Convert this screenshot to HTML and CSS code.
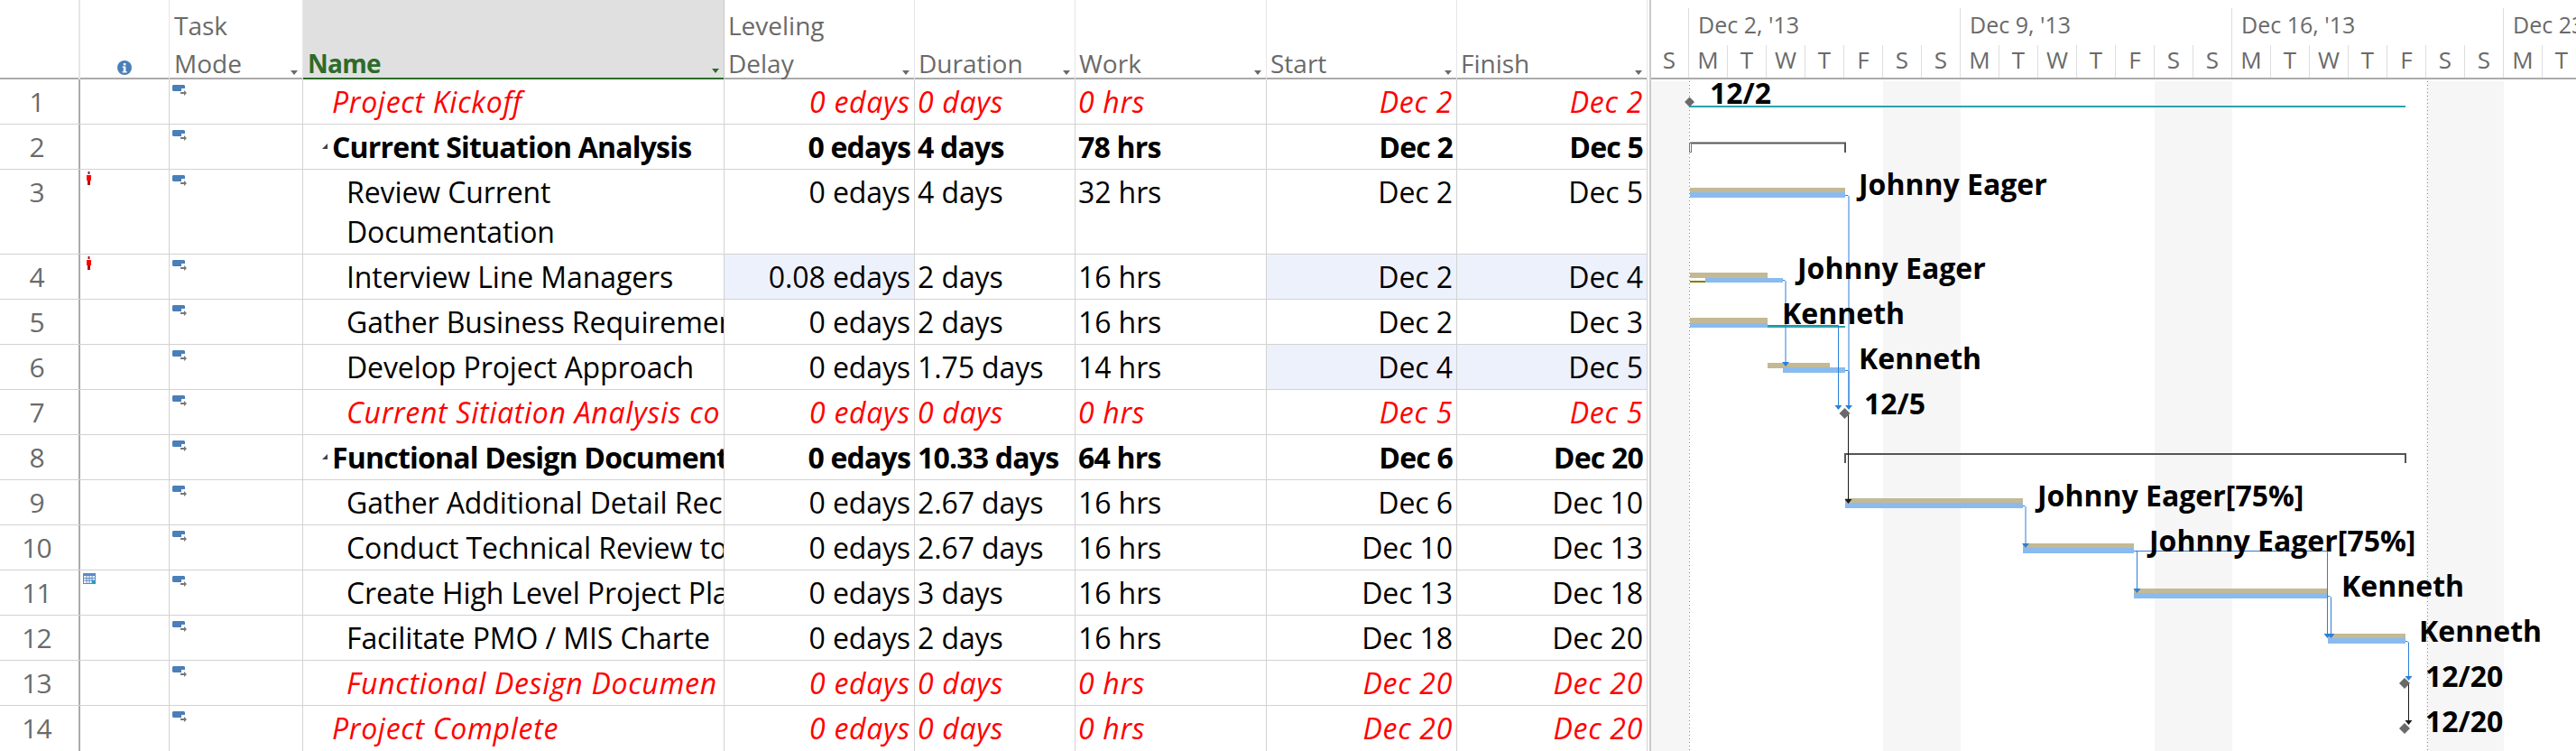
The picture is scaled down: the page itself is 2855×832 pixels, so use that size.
FILE: index.html
```html
<!DOCTYPE html>
<html lang="en">
<head>
<meta charset="utf-8">
<title>Project Gantt</title>
<link rel="stylesheet" href="styles.css">
</head>
<body>
<svg class="defs" width="0" height="0" aria-hidden="true">
  <symbol id="mode" viewBox="0 0 17 12">
    <path d="M1 0h12l1 1v3H10v3H1L0 6V1z" fill="#4a7fb8"/>
    <path d="M9 8h4V6l3 3-3 3v-2H9z" fill="#777"/>
  </symbol>
  <symbol id="person" viewBox="0 0 5 15">
    <rect x="1.500" y="0" width="2" height="3" fill="#a8101a"/>
    <rect x="0" y="4" width="5" height="6" fill="#f00"/>
    <rect x="1" y="10" width="3" height="5" fill="#b80c0c"/>
  </symbol>
</svg>
<div class="app">
  <div class="table">
    <div class="row head">
      <div class="c num"></div>
      <div class="c ind"><svg class="info" viewBox="0 0 16 16"><circle cx="8" cy="8" r="8" fill="#4a7fb8"/><rect x="6.800" y="3" width="2.600" height="2.400" fill="#fff"/><path d="M5.800 6.600h3.600v5.400h1.200v1.400H5.600V12h1.200V8H5.800z" fill="#fff"/></svg></div>
      <div class="c h htask">Task<br>Mode<i class="sort"></i></div>
      <div class="c h sel"><br>Name<i class="sort"></i></div>
      <div class="c h">Leveling<br>Delay<i class="sort"></i></div>
      <div class="c h"><br>Duration<i class="sort"></i></div>
      <div class="c h"><br>Work<i class="sort"></i></div>
      <div class="c h"><br>Start<i class="sort"></i></div>
      <div class="c h"><br>Finish<i class="sort"></i></div>
    </div>

    <div class="row ms">
      <div class="c num">1</div><div class="c ind"></div><div class="c mode"><svg class="ico"><use href="#mode"/></svg></div>
      <div class="c name l1">Project Kickoff</div>
      <div class="c r">0 edays</div><div class="c">0 days</div><div class="c">0 hrs</div><div class="c r">Dec 2</div><div class="c r">Dec 2</div>
    </div>
    <div class="row sum">
      <div class="c num">2</div><div class="c ind"></div><div class="c mode"><svg class="ico"><use href="#mode"/></svg></div>
      <div class="c name l1"><i class="tw"></i>Current Situation Analysis</div>
      <div class="c r">0 edays</div><div class="c">4 days</div><div class="c">78 hrs</div><div class="c r">Dec 2</div><div class="c r">Dec 5</div>
    </div>
    <div class="row tall">
      <div class="c num">3</div><div class="c ind"><svg class="pers"><use href="#person"/></svg></div><div class="c mode"><svg class="ico"><use href="#mode"/></svg></div>
      <div class="c name l2">Review Current<br>Documentation</div>
      <div class="c r">0 edays</div><div class="c">4 days</div><div class="c">32 hrs</div><div class="c r">Dec 2</div><div class="c r">Dec 5</div>
    </div>
    <div class="row">
      <div class="c num">4</div><div class="c ind"><svg class="pers"><use href="#person"/></svg></div><div class="c mode"><svg class="ico"><use href="#mode"/></svg></div>
      <div class="c name l2">Interview Line Managers</div>
      <div class="c r chg">0.08 edays</div><div class="c">2 days</div><div class="c">16 hrs</div><div class="c r chg">Dec 2</div><div class="c r chg">Dec 4</div>
    </div>
    <div class="row">
      <div class="c num">5</div><div class="c ind"></div><div class="c mode"><svg class="ico"><use href="#mode"/></svg></div>
      <div class="c name l2">Gather Business Requiremer</div>
      <div class="c r">0 edays</div><div class="c">2 days</div><div class="c">16 hrs</div><div class="c r">Dec 2</div><div class="c r">Dec 3</div>
    </div>
    <div class="row">
      <div class="c num">6</div><div class="c ind"></div><div class="c mode"><svg class="ico"><use href="#mode"/></svg></div>
      <div class="c name l2">Develop Project Approach</div>
      <div class="c r">0 edays</div><div class="c">1.75 days</div><div class="c">14 hrs</div><div class="c r chg">Dec 4</div><div class="c r chg">Dec 5</div>
    </div>
    <div class="row ms">
      <div class="c num">7</div><div class="c ind"></div><div class="c mode"><svg class="ico"><use href="#mode"/></svg></div>
      <div class="c name l2">Current Sitiation Analysis co</div>
      <div class="c r">0 edays</div><div class="c">0 days</div><div class="c">0 hrs</div><div class="c r">Dec 5</div><div class="c r">Dec 5</div>
    </div>
    <div class="row sum">
      <div class="c num">8</div><div class="c ind"></div><div class="c mode"><svg class="ico"><use href="#mode"/></svg></div>
      <div class="c name l1"><i class="tw"></i>Functional Design Document</div>
      <div class="c r">0 edays</div><div class="c">10.33 days</div><div class="c">64 hrs</div><div class="c r">Dec 6</div><div class="c r">Dec 20</div>
    </div>
    <div class="row">
      <div class="c num">9</div><div class="c ind"></div><div class="c mode"><svg class="ico"><use href="#mode"/></svg></div>
      <div class="c name l2">Gather Additional Detail Rec</div>
      <div class="c r">0 edays</div><div class="c">2.67 days</div><div class="c">16 hrs</div><div class="c r">Dec 6</div><div class="c r">Dec 10</div>
    </div>
    <div class="row">
      <div class="c num">10</div><div class="c ind"></div><div class="c mode"><svg class="ico"><use href="#mode"/></svg></div>
      <div class="c name l2">Conduct Technical Review to</div>
      <div class="c r">0 edays</div><div class="c">2.67 days</div><div class="c">16 hrs</div><div class="c r">Dec 10</div><div class="c r">Dec 13</div>
    </div>
    <div class="row">
      <div class="c num">11</div>
      <div class="c ind"><svg class="cal" viewBox="0 0 14 12"><rect width="14" height="12" fill="#5b8ac4"/><rect x="1" y="3" width="12" height="8" fill="#fff"/><path d="M4 3v8M7 3v8M10 3v8M1 5.500h12M1 8h12" stroke="#5b8ac4" stroke-width="1" fill="none"/><rect x="10" y="8" width="3" height="3" fill="#1aa0c8"/></svg></div>
      <div class="c mode"><svg class="ico"><use href="#mode"/></svg></div>
      <div class="c name l2">Create High Level Project Pla</div>
      <div class="c r">0 edays</div><div class="c">3 days</div><div class="c">16 hrs</div><div class="c r">Dec 13</div><div class="c r">Dec 18</div>
    </div>
    <div class="row">
      <div class="c num">12</div><div class="c ind"></div><div class="c mode"><svg class="ico"><use href="#mode"/></svg></div>
      <div class="c name l2">Facilitate PMO / MIS Charte</div>
      <div class="c r">0 edays</div><div class="c">2 days</div><div class="c">16 hrs</div><div class="c r">Dec 18</div><div class="c r">Dec 20</div>
    </div>
    <div class="row ms">
      <div class="c num">13</div><div class="c ind"></div><div class="c mode"><svg class="ico"><use href="#mode"/></svg></div>
      <div class="c name l2">Functional Design Documen</div>
      <div class="c r">0 edays</div><div class="c">0 days</div><div class="c">0 hrs</div><div class="c r">Dec 20</div><div class="c r">Dec 20</div>
    </div>
    <div class="row ms last">
      <div class="c num">14</div><div class="c ind"></div><div class="c mode"><svg class="ico"><use href="#mode"/></svg></div>
      <div class="c name l1">Project Complete</div>
      <div class="c r">0 edays</div><div class="c">0 days</div><div class="c">0 hrs</div><div class="c r">Dec 20</div><div class="c r">Dec 20</div>
    </div>
  </div>

  <div class="split"></div>

  <div class="chart">
    <div class="scale">
      <div class="weeks">
        <div class="wk blank"></div>
        <div class="wk">Dec 2, '13</div>
        <div class="wk">Dec 9, '13</div>
        <div class="wk">Dec 16, '13</div>
        <div class="wk">Dec 23, '13</div>
      </div>
      <div class="days">
        <span>S</span><span>M</span><span>T</span><span>W</span><span>T</span><span>F</span><span>S</span><span>S</span>
        <span>M</span><span>T</span><span>W</span><span>T</span><span>F</span><span>S</span><span>S</span>
        <span>M</span><span>T</span><span>W</span><span>T</span><span>F</span><span>S</span><span>S</span>
        <span>M</span><span>T</span>
      </div>
    </div>
    <div class="canvas">
      <svg class="gantt" viewBox="1830 88 1025 744" width="1025" height="744">
        <g class="wkend">
          <rect x="1830" y="90" width="42" height="742"/>
          <rect x="2087" y="90" width="86" height="742"/>
          <rect x="2388" y="90" width="86" height="742"/>
          <rect x="2689" y="90" width="86" height="742"/>
        </g>
        <path class="dots" d="M1872.500 90V832M2690.500 90V832"/>
        <rect class="teal" x="1873" y="117" width="793" height="2"/>
        <path class="bracket" d="M1873 158.500H2045V169"/>
        <rect class="tick" x="1872.500" y="158.500" width="2" height="10"/>
        <path class="bracket" d="M2045 513V503H2666V513"/>

        <g class="bars">
          <rect class="tan" x="1873" y="208" width="172" height="5"/><rect class="blue" x="1873" y="213" width="172" height="6"/>
          <rect class="tan" x="1873" y="302" width="86" height="6"/><rect class="blue" x="1890" y="308" width="86" height="5"/><rect class="olive" x="1873" y="311" width="17" height="2"/>
          <rect class="tan" x="1873" y="352" width="86" height="6"/><rect class="blue" x="1873" y="358" width="86" height="5"/><rect class="teal" x="1959" y="361" width="86" height="2"/>
          <rect class="tan" x="1959" y="402" width="69" height="6"/><rect class="blue" x="1976" y="407" width="69" height="6"/>
          <rect class="tan" x="2045" y="552" width="197" height="5"/><rect class="blue" x="2045" y="557" width="197" height="6"/>
          <rect class="tan" x="2242" y="602" width="123" height="5"/><rect class="blue" x="2242" y="607" width="123" height="6"/>
          <rect class="tan" x="2365" y="652" width="215" height="5"/><rect class="blue" x="2365" y="657" width="215" height="6"/>
          <rect class="tan" x="2580" y="702" width="86" height="5"/><rect class="blue" x="2580" y="707" width="86" height="6"/>
        </g>

        <g class="links">
          <path d="M2045 216.500h3l1 1V449"/>
          <path d="M1976 310.500h2l1 1V401"/>
          <path d="M1959 360.500H2037.500V449"/>
          <path d="M2045 410.500h3l1 1V449"/>
          <path d="M2242 560.500h2l1 1V602"/>
          <path d="M2365 610.500H2578l1.500 1.500V702"/>
          <path d="M2368.500 610.500V652"/>
          <path d="M2580 660.500h2l1.500 1.500V702"/>
          <path d="M2666 710.500h2l1.500 1.500V749"/>
        </g>
        <g class="heads">
          <path d="M2045 449h8l-4 5z"/><path d="M2033.500 449h8l-4 5z"/>
          <path d="M1975 401h8l-4 5z"/>
          <path d="M2241 602h8l-4 5z"/>
          <path d="M2364.500 652h8l-4 5z"/>
          <path d="M2575.500 702h8l-4 5z"/><path d="M2579.500 702h8l-4 5z"/>
          <path d="M2665.500 749h8l-4 5z"/>
        </g>
        <path class="blk" d="M2048.500 459V553M2669.500 758V798"/>
        <path class="blkhead" d="M2044.500 553h8l-4 5z"/>
        <path class="blkhead" d="M2665.500 798h8l-4 5z"/>

        <g class="dia">
          <path d="M1872.500 107.500l5.500 5.500-5.500 5.500-5.500-5.500z"/>
          <path d="M2044.500 452l6 6-6 6-6-6z"/>
          <path d="M2665 751l6 6-6 6-6-6z"/>
          <path d="M2665 801l6 6-6 6-6-6z"/>
        </g>
      </svg>
      <span class="lbl" style="left:65px;top:-5px">12/2</span>
      <span class="lbl" style="left:230px;top:96px">Johnny Eager</span>
      <span class="lbl" style="left:162px;top:189px">Johnny Eager</span>
      <span class="lbl" style="left:145px;top:239px">Kenneth</span>
      <span class="lbl" style="left:230px;top:289px">Kenneth</span>
      <span class="lbl" style="left:236px;top:339px">12/5</span>
      <span class="lbl" style="left:428px;top:441px">Johnny Eager[75%]</span>
      <span class="lbl" style="left:552px;top:491px">Johnny Eager[75%]</span>
      <span class="lbl" style="left:765px;top:541px">Kenneth</span>
      <span class="lbl" style="left:851px;top:591px">Kenneth</span>
      <span class="lbl" style="left:858px;top:641px">12/20</span>
      <span class="lbl" style="left:858px;top:691px">12/20</span>
    </div>
  </div>
</div>
</body>
</html>
```

FILE: styles.css
```css
* { box-sizing: border-box; }
html, body { margin: 0; padding: 0; background: #fff; }
body {
  width: 2855px;
  height: 832px;
  overflow: hidden;
  font-family: "Open Sans", "Noto Sans", sans-serif;
  color: #000;
}
.defs { position: absolute; }
.app { display: flex; height: 832px; }

/* table */
.table { width: 1826px; flex: none; }
.row {
  display: grid;
  grid-template-columns: 89px 99px 148px 467px 211px 178px 212px 211px 211px;
  height: 50px;
  border-bottom: 1px solid #d2d2d2;
  font-size: 32px;
  letter-spacing: -0.1px;
  line-height: 44px;
}
.row.tall { height: 94px; }
.row.last { border-bottom: 0; }
.c {
  position: relative;
  min-width: 0;
  padding: 3px 4px 0 3px;
  border-right: 1px solid #d2d2d2;
  white-space: nowrap;
  overflow: hidden;
}
.num {
  text-align: center;
  color: #6a6a6a;
  font-size: 30px;
  letter-spacing: -1px;
  border-right: 2px solid #ababab;
  padding: 3px 6px 0 0;
}
.r { text-align: right; }
.chg { background: #edf1fc; }
.ms { color: #f00; font-style: italic; letter-spacing: 0.7px; }
.sum { font-weight: 700; letter-spacing: -0.8px; }
.ms .num, .sum .num {
  color: #6a6a6a;
  font-style: normal;
  font-weight: 400;
  letter-spacing: -1px;
}

/* header */
.row.head {
  height: 88px;
  border-bottom: 2px solid #ababab;
  color: #6a6a6a;
  font-size: 28px;
  letter-spacing: 0;
  line-height: 42px;
}
.head .c { border-right-color: #e6e6e6; }
.head .h { padding: 7px 0 0 4px; }
.head .htask { padding-left: 5px; }
.head .sel {
  background: #e0e0e0;
  color: #2e6b2a;
  font-weight: 700;
  letter-spacing: -0.7px;
  border-right-color: #c8c8c8;
  box-shadow: inset 0 -2px 0 #2e6b2a;
  height: 88px;
  padding-left: 5px;
}
.sort {
  position: absolute;
  right: 5px;
  bottom: 5px;
  width: 0;
  height: 0;
  border: 4px solid transparent;
  border-top: 5px solid #6a6a6a;
  border-bottom: 0;
}
.sel .sort { border-top-color: #2e6b2a; bottom: 7px; }
.info { position: absolute; left: 41px; bottom: 5px; width: 16px; height: 16px; }

/* name cell */
.name { padding-right: 0; }
.c.l1 { padding-left: 32px; }
.c.l2 { padding-left: 48px; }
.tw {
  position: absolute;
  left: 21px;
  top: 21px;
  width: 0;
  height: 0;
  border-style: solid;
  border-width: 0 0 6px 6px;
  border-color: transparent transparent #444 transparent;
}

/* icons */
.c.mode { padding: 6px 0 0 3px; }
.ico { display: block; width: 17px; height: 12px; }
.c.ind { padding: 2px 0 0 6px; }
.pers { display: block; width: 5px; height: 15px; margin-left: 1px; }
.cal { display: block; width: 14px; height: 12px; margin: 1px 0 0 -3px; }

/* splitter */
.split {
  width: 4px;
  flex: none;
  border-right: 2px solid #cacaca;
}

/* chart */
.chart { flex: 1; min-width: 0; overflow: hidden; position: relative; }
.scale {
  height: 88px;
  margin-left: -1px;
  border-bottom: 2px solid #ababab;
  color: #6a6a6a;
  font-size: 25px;
  width: 1100px;
  padding-top: 9px;
}
.weeks { display: flex; height: 41px; }
.wk {
  flex: none;
  width: 301px;
  padding-left: 10px;
  line-height: 36px;
  border-right: 1px solid #dedede;
  white-space: nowrap;
}
.wk.blank { width: 43px; padding: 0; }
.days { display: flex; height: 36px; font-size: 26px; }
.days span {
  flex: none;
  width: 43px;
  text-align: center;
  line-height: 32px;
  border-right: 1px solid #dedede;
}
.canvas { position: relative; height: 744px; }
.gantt { display: block; }
.wkend rect { fill: #f6f6f6; }
.dots { stroke: #8a8a8a; stroke-width: 1; stroke-dasharray: 1 3; fill: none; }
.teal { fill: #2aa3ad; }
.tan { fill: #c3b995; }
.blue { fill: #8abbee; }
.olive { fill: #808000; }
.bracket { fill: none; stroke: #555; stroke-width: 2; }
.tick { fill: #fff; stroke: #777; stroke-width: 1; }
.links path { fill: none; stroke: #2a7fd9; stroke-width: 1; }
.heads path { fill: #2a7fd9; }
.blk { stroke: #1a1a1a; stroke-width: 1; fill: none; }
.blkhead { fill: #1a1a1a; }
.dia path { fill: #6a6a6a; }
.lbl {
  position: absolute;
  font-weight: 700;
  font-size: 32px;
  line-height: 40px;
  white-space: nowrap;
  color: #000;
}
```
